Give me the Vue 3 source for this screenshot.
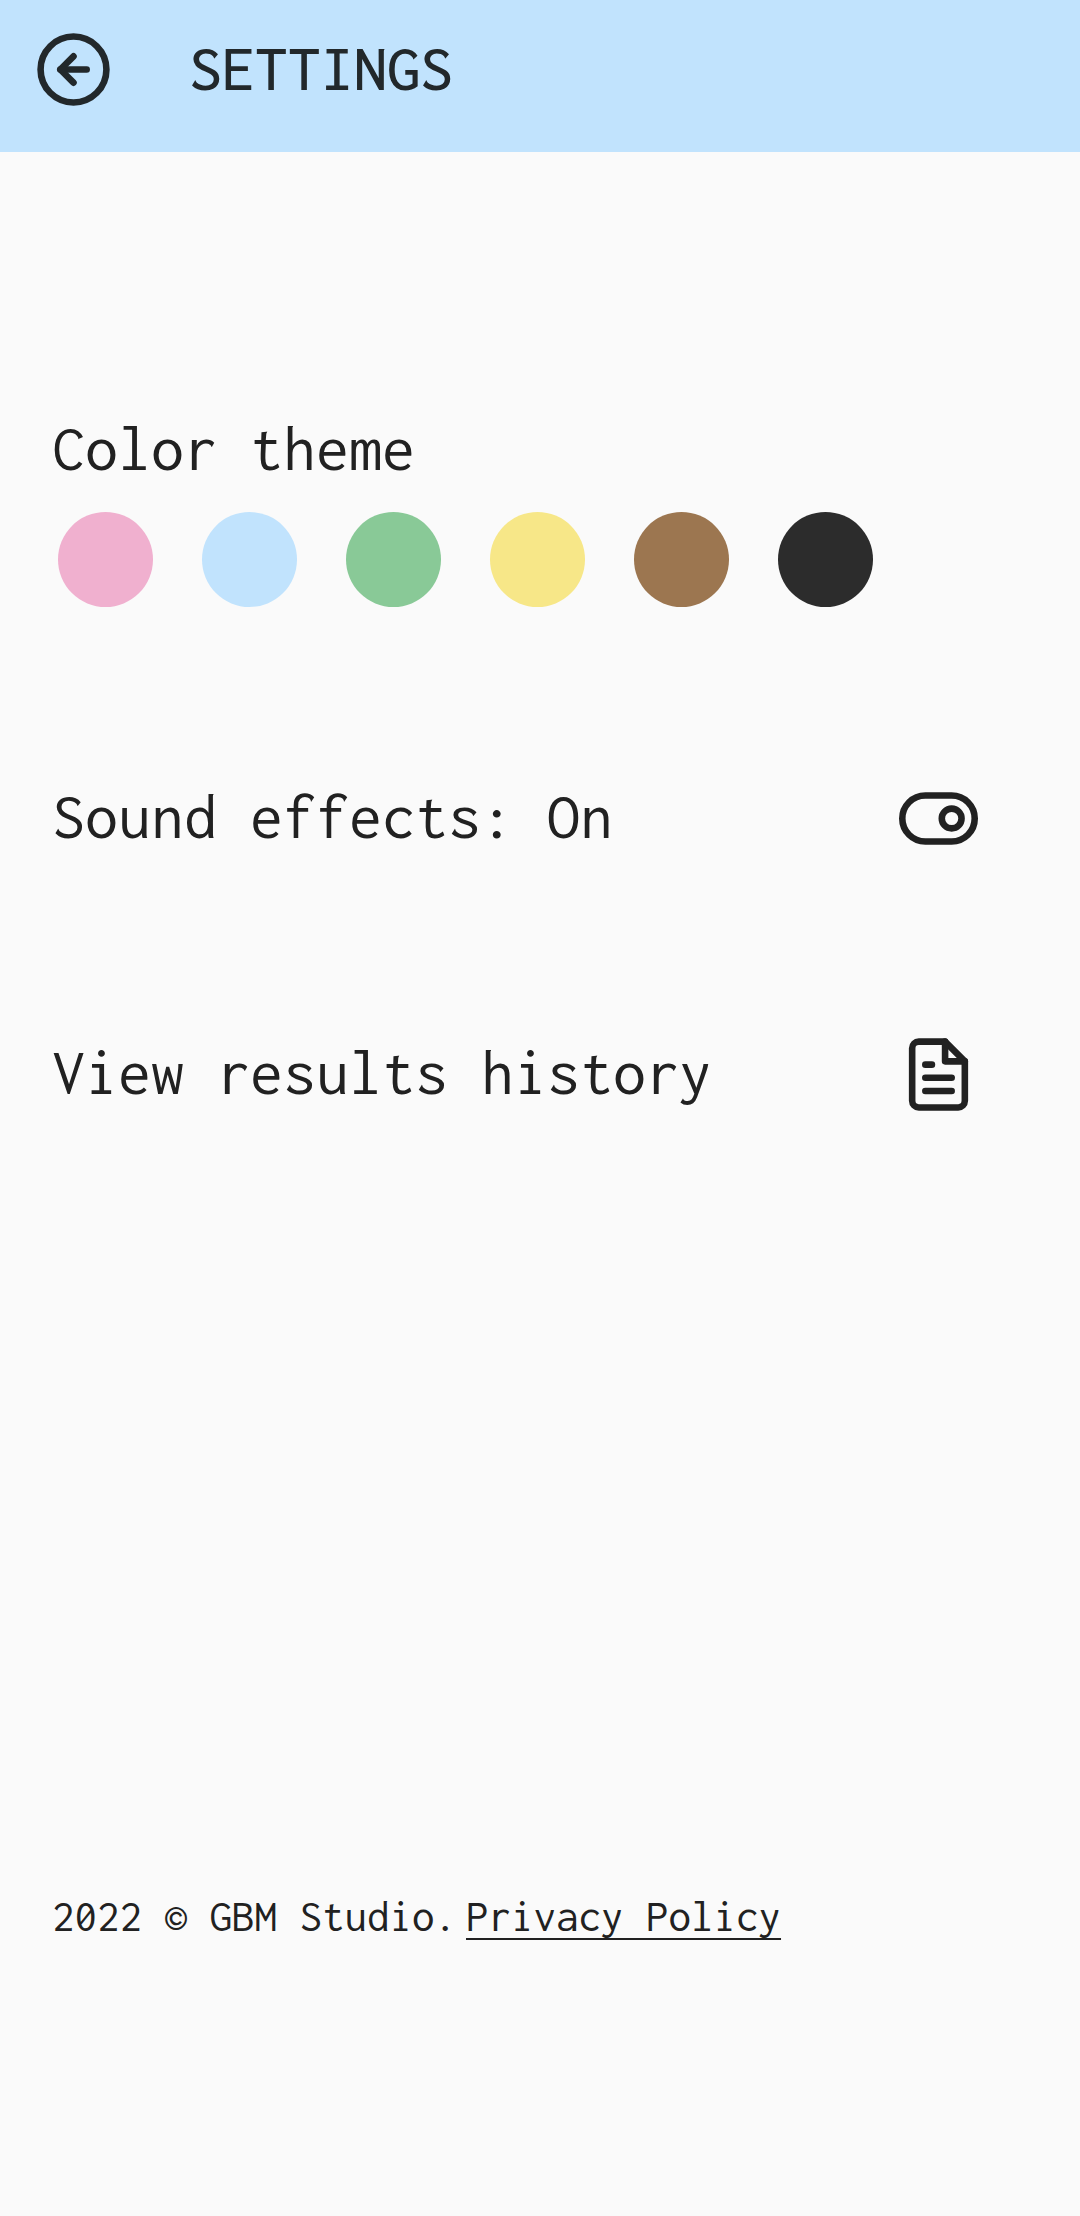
<script setup>
import { ref } from 'vue'

const themes = [
  { name: 'Pink', color: '#f0b0cf' },
  { name: 'Blue', color: '#c1e3fd' },
  { name: 'Green', color: '#89c997' },
  { name: 'Yellow', color: '#f7e788' },
  { name: 'Brown', color: '#9c7650' },
  { name: 'Dark', color: '#2c2c2c' },
]

const theme = ref('Blue')
const soundOn = ref(true)
</script>

<template>
  <div class="page">
    <header class="bar">
      <button class="back" type="button" aria-label="Back">
        <svg class="icon" viewBox="0 0 24 24" aria-hidden="true">
          <circle cx="12" cy="12" r="10" />
          <polyline points="12 8 8 12 12 16" />
          <line x1="16" y1="12" x2="8" y2="12" />
        </svg>
      </button>
      <h1 class="title">SETTINGS</h1>
    </header>

    <main class="content">
      <fieldset class="themes">
        <legend class="legend">Color theme</legend>
        <div class="swatches">
          <input
            v-for="t in themes"
            :key="t.name"
            v-model="theme"
            class="swatch"
            type="radio"
            name="theme"
            :value="t.name"
            :aria-label="t.name"
            :style="{ backgroundColor: t.color }"
          />
        </div>
      </fieldset>

      <div class="rows">
        <button class="row" type="button" :aria-pressed="soundOn" @click="soundOn = !soundOn">
          <span class="label">Sound effects: {{ soundOn ? 'On' : 'Off' }}</span>
          <svg class="icon" viewBox="0 0 24 24" aria-hidden="true">
            <rect x="1" y="5" width="22" height="14" rx="7" />
            <circle :cx="soundOn ? 16 : 8" cy="12" r="3" />
          </svg>
        </button>

        <button class="row" type="button">
          <span class="label">View results history</span>
          <svg class="icon" viewBox="0 0 24 24" aria-hidden="true">
            <path d="M14 2H6a2 2 0 0 0-2 2v16a2 2 0 0 0 2 2h12a2 2 0 0 0 2-2V8z" />
            <polyline points="14 2 14 8 20 8" />
            <line x1="16" y1="13" x2="8" y2="13" />
            <line x1="16" y1="17" x2="8" y2="17" />
            <line x1="10" y1="9" x2="8" y2="9" />
          </svg>
        </button>
      </div>
    </main>

    <footer class="footer">
      <span>2022 © GBM Studio.</span>
      <a class="policy" href="#privacy">Privacy Policy</a>
    </footer>
  </div>
</template>

<style>
body {
  margin: 0;
  background: #fafafa;
}
</style>

<style scoped>
.page {
  display: flex;
  flex-direction: column;
  box-sizing: border-box;
  min-height: 100vh;
  padding-bottom: 278px;
  background: #fafafa;
  color: #212121;
  font-family: Inconsolata, "DejaVu Sans Mono", monospace;
  font-size: 66px;
  line-height: 64px;
}

button {
  padding: 0;
  border: 0;
  background: none;
  color: inherit;
  font: inherit;
  text-align: left;
  cursor: pointer;
}

.bar {
  display: flex;
  align-items: center;
  gap: 76px;
  padding: 30px 34px 43px;
  background: #c1e3fd;
  color: #22282b;
}

.back {
  display: flex;
}

.title {
  margin: 0;
  padding-bottom: 4px;
  font-size: inherit;
  font-weight: 500;
}

.icon {
  flex: none;
  width: 79px;
  height: 79px;
  fill: none;
  stroke: currentColor;
  stroke-width: 2;
  stroke-linecap: round;
  stroke-linejoin: round;
}

.content {
  display: flex;
  flex-direction: column;
  gap: 172px;
  padding: 264px 102px 0 52px;
}

.themes {
  min-width: 0;
  margin: 0;
  padding: 0;
  border: 0;
}

.legend {
  padding: 0;
}

.swatches {
  display: flex;
  gap: 49px;
  padding: 32px 6px 0;
}

.swatch {
  appearance: none;
  flex: none;
  width: 95px;
  height: 95px;
  margin: 0;
  border-radius: 50%;
  cursor: pointer;
}

.rows {
  display: flex;
  flex-direction: column;
  gap: 177px;
}

.row {
  display: flex;
  align-items: center;
  justify-content: space-between;
}

.label {
  padding-bottom: 6px;
}

.footer {
  display: flex;
  flex-wrap: wrap;
  gap: 9px;
  margin-top: auto;
  padding: 0 52px;
  font-size: 45px;
  line-height: 44px;
}

.policy {
  color: inherit;
  text-decoration: underline 2px;
  text-decoration-skip-ink: none;
  text-underline-offset: 7px;
}
</style>
